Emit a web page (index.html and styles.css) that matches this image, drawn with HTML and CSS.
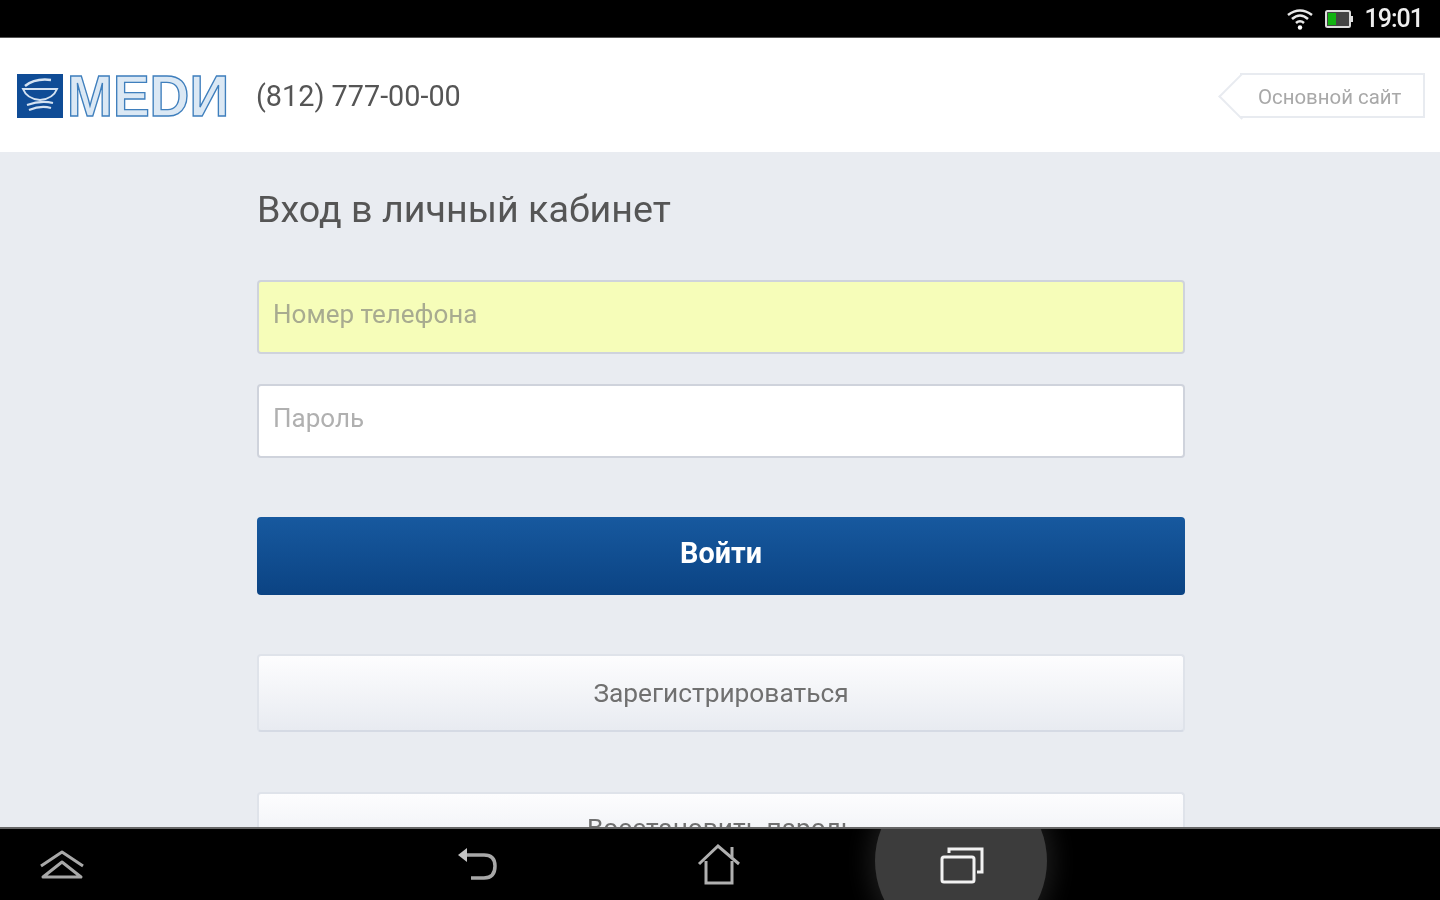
FILE: index.html
```html
<!DOCTYPE html>
<html lang="ru">
<head>
  <meta charset="UTF-8" />
  <title>MEDИ</title>
  <link rel="stylesheet" href="styles.css">
</head>
<body>
  <div class="statusbar">
    <svg class="wifi" width="28" height="24" viewBox="0 0 28 24" fill="none" stroke="#e8e8e8" stroke-width="2.6">
      <path d="M2 8 Q14 -1 26 8" />
      <path d="M6 12 Q14 5 22 12" />
      <path d="M10 16 Q14 12.500 18 16" />
      <circle cx="14" cy="20.500" r="2.200" fill="#fff" stroke="none" />
    </svg>
    <svg class="battery" width="29" height="20" viewBox="0 0 29 20">
      <rect x="1" y="2" width="24" height="16" rx="1.500" fill="#444" stroke="#ddd" stroke-width="2" />
      <rect x="3" y="4" width="8" height="12" fill="#12b312" />
      <rect x="25" y="7" width="3" height="6" fill="#ddd" />
    </svg>
    <span class="clock">19:01</span>
  </div>

  <header class="topbar">
    <svg class="logo" width="212" height="70" viewBox="0 0 212 70">
      <rect x="0" y="13" width="46" height="44" fill="#0f4c96" />
      <g fill="none" stroke="#d5e3f2">
        <path d="M6 28 Q10 38 23 39 Q36 38 40 28 Z" stroke-width="2" />
        <path d="M8 25 Q18 17 34 19" stroke-width="2.500" />
        <path d="M10 44 Q24 39 36 42 M12 49 Q24 44 34 47" stroke-width="2" />
      </g>
      <text class="logo-word" x="50" y="55" textLength="162" lengthAdjust="spacingAndGlyphs">MEDИ</text>
    </svg>
    <span class="phone">(812) 777-00-00</span>
    <a class="main-site" href="#">Основной сайт</a>
  </header>

  <main class="content">
    <div class="login">
      <h1>Вход в личный кабинет</h1>
      <input class="field field-filled" type="text" placeholder="Номер телефона" />
      <input class="field" type="password" placeholder="Пароль" />
      <button class="btn btn-primary">Войти</button>
      <button class="btn btn-light btn-register">Зарегистрироваться</button>
      <button class="btn btn-light btn-restore">Восстановить пароль</button>
    </div>
  </main>

  <nav class="navbar">
    <svg class="nav-up" width="46" height="32" viewBox="0 0 46 32" fill="none" stroke="#a8a8a8" stroke-width="3" stroke-linejoin="round">
      <path d="M2 17 L23 3 L44 17" />
      <path d="M4 28 L23 13 L42 28 Z" />
    </svg>
    <svg class="nav-back" width="42" height="40" viewBox="0 0 42 40" fill="none" stroke="#a8a8a8" stroke-width="3.500">
      <path d="M10 10 H28 Q39 10 39 21 Q39 33 28 33 H15" />
      <path d="M11 3 L2 10 L11 17 Z" fill="#c4c4c4" stroke="none" />
    </svg>
    <svg class="nav-home" width="44" height="42" viewBox="0 0 44 42" fill="none" stroke="#b0b0b0" stroke-width="3">
      <path d="M2 20 L21 2 L42 20" />
      <path d="M35 13 V3" />
      <path d="M9 17 V39 H35 V17" />
    </svg>
    <span class="recent-glow"></span>
    <svg class="nav-recent" width="46" height="38" viewBox="0 0 46 38" fill="none" stroke="#f2f2f2" stroke-width="3">
      <rect x="2" y="11" width="32" height="25" rx="2" />
      <path d="M9 7 V3 H42 V26 H37" />
    </svg>
  </nav>
</body>
</html>
```

FILE: styles.css
```css
* {
  box-sizing: border-box;
}
html, body {
  height: 100%;
}
body {
  margin: 0;
  width: 1440px;
  height: 900px;
  overflow: hidden;
  display: flex;
  flex-direction: column;
  font-family: Roboto, 'Noto Sans', sans-serif;
  background-color: #e9ecf1;
  color: #555;
}
/* the reference is an upscaled capture, everything is a little soft */
.statusbar > *,
.phone,
.main-site,
.login,
.navbar svg {
  filter: blur(0.6px);
}
.statusbar {
  height: 38px;
  flex: none;
  display: flex;
  align-items: center;
  justify-content: flex-end;
  padding-right: 17px;
  background-color: #000;
  border-bottom: 1px solid #555;
  color: #eee;
}
.wifi {
  margin-right: 11px;
}
.battery {
  margin-right: 11px;
}
.clock {
  font-size: 25px;
  font-weight: 500;
  letter-spacing: -1px;
}
.topbar {
  height: 114px;
  flex: none;
  display: flex;
  align-items: center;
  padding: 0 15px 0 17px;
  background-color: #fff;
}
.logo {
  flex: none;
  margin-top: 2px;
  filter: blur(0.6px);
}
.logo-word {
  font-family: 'Liberation Sans', sans-serif;
  font-size: 58px;
  font-weight: 700;
  fill: #dbe8f4;
  stroke: #3f7fbd;
  stroke-width: 1.400px;
}
.phone {
  margin-left: 27px;
  margin-top: 1px;
  font-size: 28.800px;
  color: #555;
}
.main-site {
  position: relative;
  margin-left: auto;
  margin-top: 1px;
  width: 185px;
  height: 45px;
  display: flex;
  align-items: center;
  padding: 2px 0 0 18px;
  border: 2px solid #e8ebf0;
  border-left: none;
  font-size: 20.400px;
  color: #a8a8a8;
  text-decoration: none;
}
.main-site::before {
  content: "";
  position: absolute;
  left: -15px;
  top: 5px;
  width: 31px;
  height: 31px;
  border-left: 2px solid #e8ebf0;
  border-bottom: 2px solid #e8ebf0;
  transform: rotate(45deg);
}
.content {
  flex: 1;
  min-height: 0;
  overflow: hidden;
}
.login {
  width: 928px;
  margin-left: 257px;
  display: flex;
  flex-direction: column;
}
h1 {
  margin: 33px 0 47px;
  font-size: 37.700px;
  line-height: 48px;
  font-weight: 400;
  color: #555;
}
.field {
  height: 74px;
  margin-bottom: 30px;
  padding: 0 14px 6px;
  border: 2px solid #cfd3dc;
  border-radius: 4px;
  background-color: #fff;
  font-family: inherit;
  font-size: 26px;
  outline: none;
}
.field::placeholder {
  color: #b0b0b0;
}
.field-filled {
  background-color: #f6fdb9;
}
.field-filled::placeholder {
  color: #a8ab90;
}
.btn {
  height: 78px;
  margin-bottom: 60px;
  flex: none;
  border-radius: 4px;
  font-family: inherit;
  font-size: 26.300px;
}
.btn-primary {
  margin-top: 29px;
  padding-bottom: 7px;
  border: none;
  background: linear-gradient(#17599f, #0b4383);
  color: #fff;
  font-size: 28.800px;
  font-weight: 700;
}
.btn-light {
  padding-bottom: 2px;
  border: 2px solid #dfe3ea;
  border-bottom-color: #d5dae4;
  background: linear-gradient(#fdfdfe, #e8ebf1);
  color: #707070;
}
.btn-register {
  margin-top: -1px;
}
.btn-restore {
  padding-bottom: 7px;
}
.navbar {
  position: relative;
  height: 73px;
  flex: none;
  overflow: hidden;
  display: flex;
  align-items: center;
  background-color: #000;
  border-top: 2px solid #666;
}
.nav-up {
  margin-left: 39px;
}
.nav-back {
  margin-left: 371px;
}
.nav-home {
  margin-left: 199px;
}
.nav-recent {
  position: relative;
  margin-left: 199px;
}
.recent-glow {
  position: absolute;
  left: 875px;
  top: -54px;
  width: 172px;
  height: 172px;
  border-radius: 50%;
  background-color: #3c3c3c;
  box-shadow: 0 0 24px 6px #1c1c1c;
}
```
